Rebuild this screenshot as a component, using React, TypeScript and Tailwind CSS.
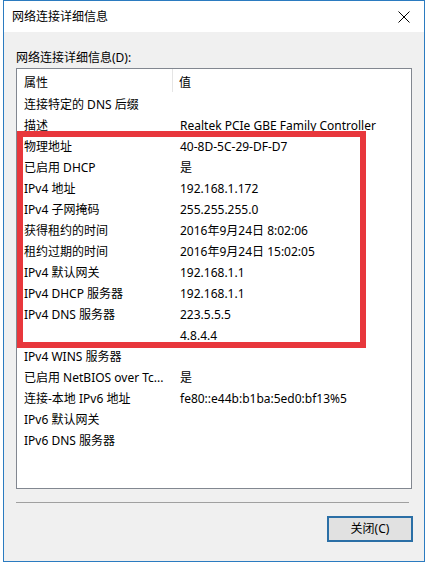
import React from 'react';

const rows: [string, string][] = [
    ['连接特定的 DNS 后缀', ''],
    ['描述', 'Realtek PCIe GBE Family Controller'],
    ['物理地址', '40-8D-5C-29-DF-D7'],
    ['已启用 DHCP', '是'],
    ['IPv4 地址', '192.168.1.172'],
    ['IPv4 子网掩码', '255.255.255.0'],
    ['获得租约的时间', '2016年9月24日 8:02:06'],
    ['租约过期的时间', '2016年9月24日 15:02:05'],
    ['IPv4 默认网关', '192.168.1.1'],
    ['IPv4 DHCP 服务器', '192.168.1.1'],
    ['IPv4 DNS 服务器', '223.5.5.5'],
    ['', '4.8.4.4'],
    ['IPv4 WINS 服务器', ''],
    ['已启用 NetBIOS over Tc...', '是'],
    ['连接-本地 IPv6 地址', 'fe80::e44b:b1ba:5ed0:bf13%5'],
    ['IPv6 默认网关', ''],
    ['IPv6 DNS 服务器', ''],
];

const App = () => {
    return (
        <div className="w-[429px] h-[568px] bg-white text-[12px] leading-4 text-black font-['Noto_Sans','Noto_Sans_CJK_SC',sans-serif]">
            <div className="ml-[3px] w-[422px] h-[562px] border border-[#2b7bc0] flex flex-col">
                {/* title bar */}
                <div className="h-[31px] bg-white flex items-center pl-[8px] pr-[14px]">
                    <span className="flex-1">网络连接详细信息</span>
                    <svg width="12" height="12" viewBox="0 0 12 12" className="text-black">
                        <path d="M0.5 0.5 L11.5 11.5 M11.5 0.5 L0.5 11.5" stroke="currentColor" strokeWidth="1" fill="none" />
                    </svg>
                </div>

                <div className="flex-1 bg-[#f0f0f0] flex flex-col pl-[12px] pt-[18px]">
                    <div>网络连接详细信息(D):</div>

                    <div className="relative mt-[2px] w-[396px] h-[421px] bg-white border border-[#828790]">
                        <div className="flex h-[23px]">
                            <div className="w-[156px] h-full flex items-center pt-[4px] pl-[7px] border-r border-[#e5e5e5]">属性</div>
                            <div className="flex items-center pt-[4px] pl-[6px]">值</div>
                        </div>
                        {rows.map(([k, v], i) => (
                            <div key={i} className="flex h-[21px] items-center pt-[4px] whitespace-nowrap">
                                <div className="w-[157px] pl-[7px] overflow-hidden">{k}</div>
                                <div className="pl-[6px]">{v}</div>
                            </div>
                        ))}

                        {/* red highlight annotation */}
                        <div className="absolute left-0 top-[62px] w-[349px] h-[217px] border-[6px] border-[#e8373c]" />
                    </div>

                    <div className="mt-[13px] mr-[15px] h-px bg-[#a0a0a0]" />

                    <div className="flex justify-end mt-[13px] mr-[11px]">
                        <button className="w-[86px] h-[26px] border-2 border-[#2b6fa6] bg-[#e1e1e1] flex items-center justify-center">
                            关闭(C)
                        </button>
                    </div>
                </div>
            </div>
        </div>
    );
};

export default App;
